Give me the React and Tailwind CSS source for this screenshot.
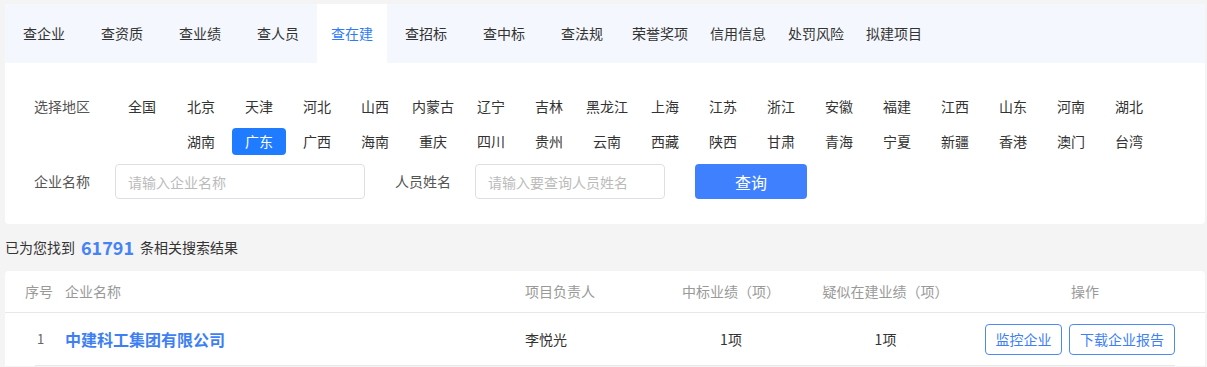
import React from "react";

const tabs = ["查企业", "查资质", "查业绩", "查人员", "查在建", "查招标", "查中标", "查法规", "荣誉奖项", "信用信息", "处罚风险", "拟建项目"];
const provinces = ["北京", "天津", "河北", "山西", "内蒙古", "辽宁", "吉林", "黑龙江", "上海", "江苏", "浙江", "安徽", "福建", "江西", "山东", "河南", "湖北", "湖南", "广东", "广西", "海南", "重庆", "四川", "贵州", "云南", "西藏", "陕西", "甘肃", "青海", "宁夏", "新疆", "香港", "澳门", "台湾"];

export default function App() {
  return (
    <div className="min-h-[367px] w-[1207px] bg-[#f4f4f4] pt-[4px] font-['Noto_Sans_CJK_SC',sans-serif] text-[14px] text-[#333]">
      <div className="ml-[5px] w-[1200px] overflow-hidden rounded-[4px] bg-white">
        <div className="flex h-[59px] bg-[#f4f7fd]">
          {tabs.map((t) =>
            t === "查在建" ? (
              <div key={t} className="flex w-[70px] items-center justify-center bg-white text-[#2f7bf5]">{t}</div>
            ) : (
              <div key={t} className="flex w-[78px] items-center justify-center text-[#333]">{t}</div>
            )
          )}
        </div>
        <div className="pl-[29px] pt-[30px] pb-[25px]">
          <div className="flex items-start">
            <div className="w-[79px] leading-[27px] text-[#555]">选择地区</div>
            <div className="mx-[2px] h-[27px] w-[54px] text-center leading-[27px]">全国</div>
            <div className="ml-[1px] flex w-[988px] flex-wrap gap-y-[8px]">
              {provinces.map((p) =>
                p === "广东" ? (
                  <div key={p} className="mx-[2px] h-[27px] w-[54px] rounded-[4px] bg-[#1f7bff] text-center leading-[27px] text-white">{p}</div>
                ) : (
                  <div key={p} className="mx-[2px] h-[27px] w-[54px] text-center leading-[27px]">{p}</div>
                )
              )}
            </div>
          </div>
          <div className="mt-[9px] flex items-center">
            <div className="w-[81px] text-[#555]">企业名称</div>
            <input className="h-[35px] w-[250px] rounded-[4px] border border-[#dcdfe6] pl-[12px] text-[14px] outline-none placeholder:text-[#bbb]" placeholder="请输入企业名称" />
            <div className="ml-[30px] w-[80px] text-[#555]">人员姓名</div>
            <input className="h-[35px] w-[190px] rounded-[4px] border border-[#dcdfe6] pl-[12px] text-[14px] outline-none placeholder:text-[#bbb]" placeholder="请输入要查询人员姓名" />
            <button className="ml-[30px] h-[35px] w-[112px] rounded-[4px] bg-[#3f80ff] text-[16px] text-white">查询</button>
          </div>
        </div>
      </div>
      <div className="flex h-[47px] items-center pl-[5px]">
        <span>已为您找到</span>
        <span className="mx-[6px] text-[18px] font-bold text-[#4683f5]">61791</span>
        <span>条相关搜索结果</span>
      </div>
      <div className="ml-[5px] w-[1200px] rounded-t-[4px] bg-white">
        <div className="flex h-[42px] items-center border-b border-[#e8e8e8] text-[#999]">
          <div className="w-[60px] pl-[20px]">序号</div>
          <div className="w-[460px]">企业名称</div>
          <div className="w-[140px]">项目负责人</div>
          <div className="w-[132px] text-center">中标业绩（项）</div>
          <div className="w-[177px] text-center">疑似在建业绩（项）</div>
          <div className="w-[222px] text-center">操作</div>
        </div>
        <div className="pl-[30px] pr-[30px]">
          <div className="flex h-[53px] items-center border-b border-[#e8e8e8]">
            <div className="w-[30px] pl-[2px] text-[13px] text-[#666]">1</div>
            <div className="w-[460px] text-[16px] font-bold text-[#3e7ff5]">中建科工集团有限公司</div>
            <div className="w-[140px]">李悦光</div>
            <div className="w-[132px] text-center">1项</div>
            <div className="w-[177px] text-center">1项</div>
            <div className="flex gap-[7px] pl-[11px]">
              <button className="h-[31px] w-[77px] rounded-[4px] border border-[#4d8af0] text-[14px] text-[#3e7ff5]">监控企业</button>
              <button className="h-[31px] w-[106px] rounded-[4px] border border-[#4d8af0] text-[14px] text-[#3e7ff5]">下载企业报告</button>
            </div>
          </div>
        </div>
      </div>
    </div>
  );
}
